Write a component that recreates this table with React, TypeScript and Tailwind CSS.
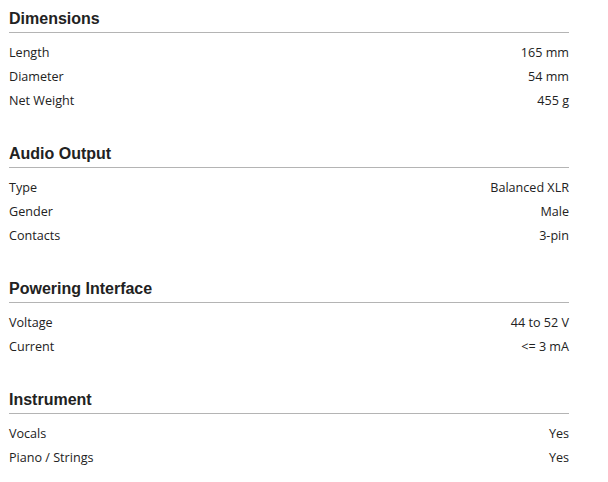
import React from "react";

const sections: { title: string; rows: [string, string][] }[] = [
  {
    title: "Dimensions",
    rows: [
      ["Length", "165 mm"],
      ["Diameter", "54 mm"],
      ["Net Weight", "455 g"],
    ],
  },
  {
    title: "Audio Output",
    rows: [
      ["Type", "Balanced XLR"],
      ["Gender", "Male"],
      ["Contacts", "3-pin"],
    ],
  },
  {
    title: "Powering Interface",
    rows: [
      ["Voltage", "44 to 52 V"],
      ["Current", "<= 3 mA"],
    ],
  },
  {
    title: "Instrument",
    rows: [
      ["Vocals", "Yes"],
      ["Piano / Strings", "Yes"],
    ],
  },
];

export default function App() {
  return (
    <div className="w-[608px] h-[482px] bg-white pl-[9px] pt-[9px]">
      <div className="w-[560px] flex flex-col gap-[31px]">
        {sections.map((s) => (
          <div key={s.title} className="flex flex-col">
            <div
              className="h-[20px] leading-[20px] text-[16px] font-bold text-[#222]"
              style={{ fontFamily: '"Liberation Sans", Arial, sans-serif' }}
            >
              {s.title}
            </div>
            <div className="mt-[3px] h-px bg-[#b4b4b4]" />
            <div
              className="mt-[8px] flex flex-col text-[12.6px] text-[#222]"
              style={{ fontFamily: '"Open Sans", "Noto Sans", sans-serif' }}
            >
              {s.rows.map(([k, v]) => (
                <div key={k} className="h-[24px] flex items-center justify-between">
                  <span>{k}</span>
                  <span>{v}</span>
                </div>
              ))}
            </div>
          </div>
        ))}
      </div>
    </div>
  );
}
